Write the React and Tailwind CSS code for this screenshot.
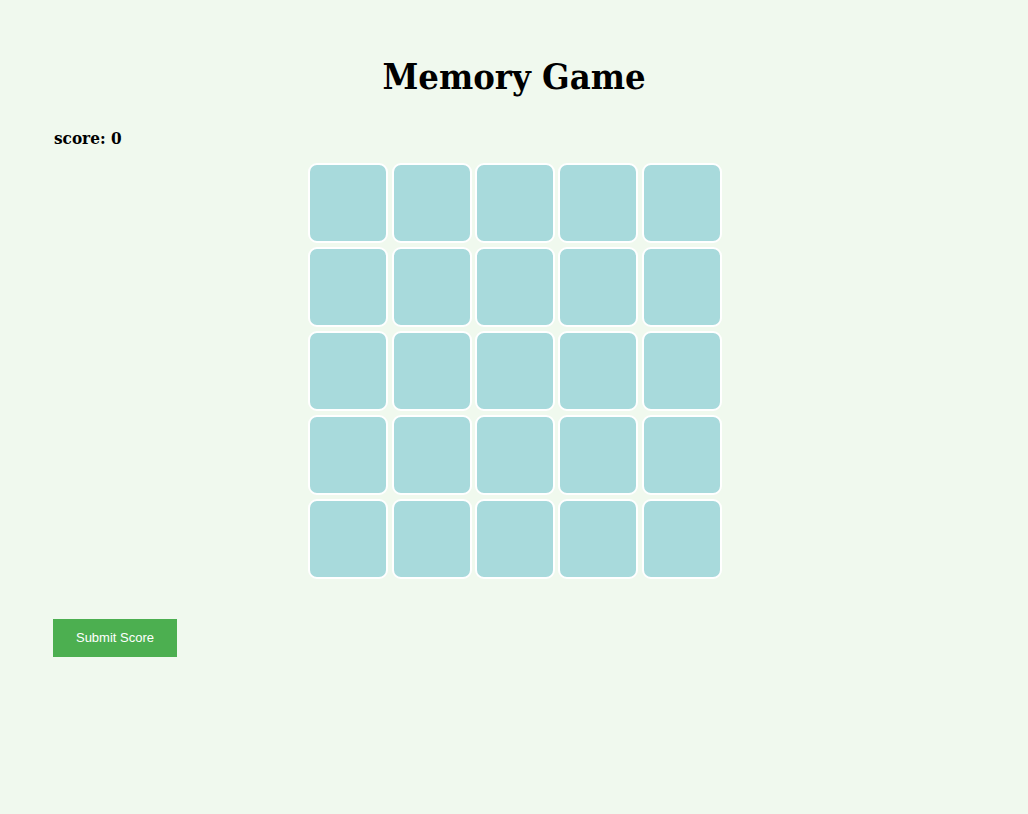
export default function App() {
  const cards = Array.from({ length: 25 });
  return (
    <div className="min-h-[814px] w-full bg-[#f0f9ee] px-[54px] pt-[52px]">
      <h1 className="text-center text-[36px] font-bold leading-[48px] text-black" style={{ fontFamily: '"DejaVu Serif Condensed", "DejaVu Serif", serif' }}>
        Memory Game
      </h1>
      <div className="mt-[26px] text-[17px] font-bold leading-[24px] text-black" style={{ fontFamily: '"DejaVu Serif Condensed", "DejaVu Serif", serif' }}>
        score: 0
      </div>
      <div className="mt-[13px] flex justify-center">
        <div className="ml-[2px] grid grid-cols-[repeat(5,80px)] gap-x-[3.3px] gap-y-[4px]">
          {cards.map((_, i) => (
            <div key={i} className="h-[80px] w-[80px] rounded-[9px] border-[2.5px] border-white bg-[#a8dadc]" />
          ))}
        </div>
      </div>
      <button className="-ml-px mt-[40px] h-[38px] w-[124px] bg-[#4caf50] text-[13px] text-white" style={{ fontFamily: '"Liberation Sans", Arial, sans-serif' }}>
        Submit Score
      </button>
    </div>
  );
}
